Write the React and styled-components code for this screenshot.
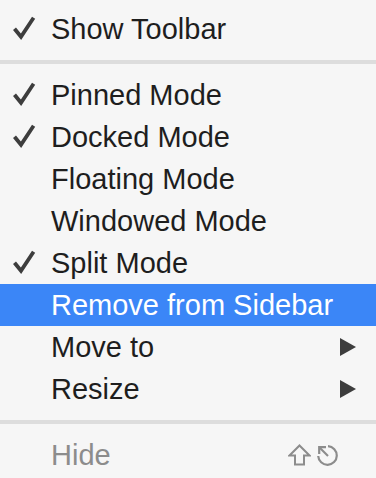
import React from "react"
import styled, { createGlobalStyle, css } from "styled-components"

const GlobalStyle = createGlobalStyle`
  html, body {
    margin: 0;
    padding: 0;
    background: #f6f6f6;
  }
`

const Menu = styled.div`
  width: 376px;
  height: 478px;
  box-sizing: border-box;
  padding-top: 8px;
  background: #f6f6f6;
  font-family: "Liberation Sans", Arial, sans-serif;
  font-size: 29px;
  color: #1e1e1e;
  overflow: hidden;
`

const Row = styled.div`
  display: flex;
  align-items: center;
  height: 42px;
  line-height: 42px;
  padding-right: 20px;
  white-space: nowrap;
  ${props => props.active && css`
    background: #3b86f7;
    color: #ffffff;
  `}
  ${props => props.disabled && css`
    color: #8c8c8c;
  `}
`

const CheckCell = styled.div`
  width: 51px;
  flex: none;
  display: flex;
  align-items: center;
  padding-left: 12px;
  box-sizing: border-box;
`

const Label = styled.div`
  flex: 1;
`

const Separator = styled.div`
  height: 4px;
  margin: 10px 0;
  background: #dddddd;
`

const Shortcut = styled.div`
  display: flex;
  align-items: center;
  gap: 5px;
  margin-right: 17px;
`

const Check = () => (
  <svg width="24" height="26" viewBox="0 0 24 26">
    <path
      d="M2.5 12.8 L9 20.8 L21.6 1.8"
      fill="none"
      stroke="#3d3d3d"
      strokeWidth="3.8"
      strokeLinejoin="miter"
    />
  </svg>
)

const Submenu = () => (
  <svg width="16" height="18" viewBox="0 0 16 18">
    <path d="M0 0 L16 9 L0 18 Z" fill="#3d3d3d" />
  </svg>
)

const ShiftKey = () => (
  <svg width="23" height="22" viewBox="0 0 23 22">
    <path
      d="M11.5 1.5 L21.5 11.5 L16 11.5 L16 20.5 L7 20.5 L7 11.5 L1.5 11.5 Z"
      fill="none"
      stroke="#8c8c8c"
      strokeWidth="2"
      strokeLinejoin="miter"
    />
  </svg>
)

const EscapeKey = () => (
  <svg width="23" height="23" viewBox="0 0 23 23">
    <path
      d="M12 2.2 A9.3 9.3 0 1 1 2.2 12"
      fill="none"
      stroke="#8c8c8c"
      strokeWidth="2.2"
    />
    <path d="M12 12 L4 4" stroke="#8c8c8c" strokeWidth="2.2" />
    <path d="M3.2 10 L3.2 3.2 L10 3.2" fill="none" stroke="#8c8c8c" strokeWidth="2.2" />
  </svg>
)

const items = [
  { label: "Pinned Mode", checked: true },
  { label: "Docked Mode", checked: true },
  { label: "Floating Mode" },
  { label: "Windowed Mode" },
  { label: "Split Mode", checked: true },
  { label: "Remove from Sidebar", active: true },
  { label: "Move to", submenu: true },
  { label: "Resize", submenu: true },
]

const MenuItem = ({ label, checked, active, submenu, disabled, shortcut }) => (
  <Row active={active} disabled={disabled}>
    <CheckCell>{checked && <Check />}</CheckCell>
    <Label>{label}</Label>
    {submenu && <Submenu />}
    {shortcut}
  </Row>
)

export default function App() {
  return (
    <>
      <GlobalStyle />
      <Menu>
        <MenuItem label="Show Toolbar" checked />
        <Separator />
        {items.map(item => (
          <MenuItem key={item.label} {...item} />
        ))}
        <Separator />
        <MenuItem
          label="Hide"
          disabled
          shortcut={
            <Shortcut>
              <ShiftKey />
              <EscapeKey />
            </Shortcut>
          }
        />
      </Menu>
    </>
  )
}
